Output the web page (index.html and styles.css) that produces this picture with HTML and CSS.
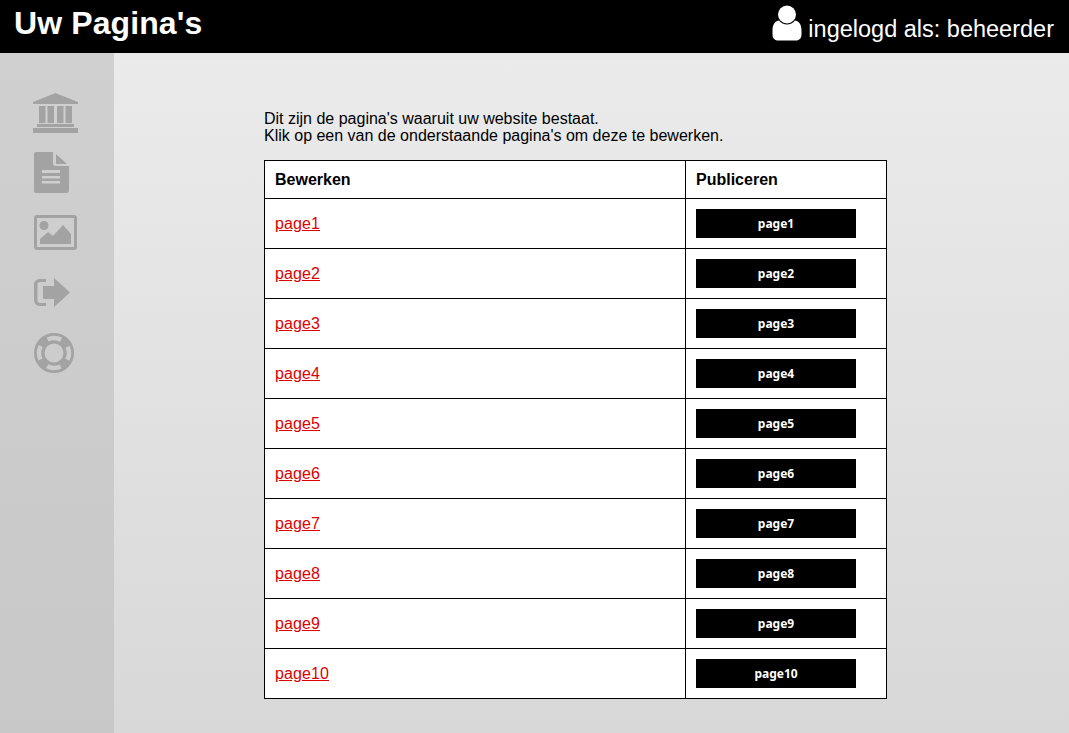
FILE: index.html
```html
<!DOCTYPE html>
<html lang="nl">
<head>
<meta charset="utf-8">
<title>Uw Pagina's</title>
<link rel="stylesheet" href="styles.css">
</head>
<body>
<header class="topbar">
  <h1 class="title">Uw Pagina's</h1>
  <div class="user">
    <svg class="user-icon" viewBox="0 0 30 36" width="30" height="36"><circle cx="15" cy="9.500" r="9" fill="#fff"/><path d="M7 15.500c2 2.500 5 4 8 4s6-1.500 8-4c4 .5 6.500 4 6.500 10v4c0 4-2.500 6-6 6H6.500c-3.500 0-6-2-6-6v-4c0-6 2.500-9.500 6.500-10z" fill="#fff"/></svg>
    <span class="user-text">ingelogd als: beheerder</span>
  </div>
</header>
<div class="layout">
  <nav class="sidebar">
    <a class="nav-item"><svg width="45" height="40" viewBox="0 0 45 40"><path d="M22.500 0 45 9v2H0V9z M6 13h6.500v17H6z M14.500 13H21v17h-6.500z M24 13h6.500v17H24z M32.500 13H39v17h-6.500z M4 31h37v3H4z M0 35h45v5H0z" fill="#a3a3a3"/></svg></a>
    <a class="nav-item"><svg width="36" height="42" viewBox="-1 0 36 42"><path d="M2 0h17v11c0 2 1 3 3 3h13v24c0 2-1 3-3 3H2c-1.500 0-2-1-2-3V2c0-1 .5-2 2-2zM8 18v3h18v-3zm0 6v2.500h18V24zm0 5v2.500h18V29zM22 2l11 10H22z" fill="#a3a3a3" fill-rule="evenodd"/></svg></a>
    <a class="nav-item"><svg width="44" height="36" viewBox="-1 0 44 36"><path d="M3 0h37c2 0 3 1 3 3v29c0 2-1 3-3 3H3c-2 0-3-1-3-3V3c0-2 1-3 3-3zm0 3v29h37V3z" fill="#a3a3a3" fill-rule="evenodd"/><circle cx="10" cy="10.500" r="4.500" fill="#a3a3a3"/><path d="M6 29v-5l8-7 5 4 10-11 8 9v10z" fill="#a3a3a3"/></svg></a>
    <a class="nav-item"><svg width="37" height="30" viewBox="-1 0 37 30"><path d="M12 1v3H6C4.500 4 3.500 5 3.500 6.500v16c0 1.500 1 2.500 2.500 2.500h6v3H6c-3.500 0-6-2.500-6-6V7c0-3.500 2.500-6 6-6z M20 0l16 14.500L20 29v-8H9V8h11z" fill="#a3a3a3"/></svg></a>
    <a class="nav-item"><svg width="41" height="40" viewBox="-1 0 41 40"><circle cx="20" cy="20" r="14.750" fill="none" stroke="#a3a3a3" stroke-width="10.500"/><circle cx="20" cy="20" r="15" fill="none" stroke="#cccccc" stroke-width="4.500" stroke-dasharray="14 9.560" stroke-dashoffset="7"/></svg></a>
  </nav>
  <main class="content">
    <p class="intro">Dit zijn de pagina's waaruit uw website bestaat.<br>Klik op een van de onderstaande pagina's om deze te bewerken.</p>
    <table class="pages">
      <thead><tr><th class="col-edit">Bewerken</th><th>Publiceren</th></tr></thead>
      <tbody>
        <tr><td><a href="#">page1</a></td><td><button class="pub">page1</button></td></tr>
        <tr><td><a href="#">page2</a></td><td><button class="pub">page2</button></td></tr>
        <tr><td><a href="#">page3</a></td><td><button class="pub">page3</button></td></tr>
        <tr><td><a href="#">page4</a></td><td><button class="pub">page4</button></td></tr>
        <tr><td><a href="#">page5</a></td><td><button class="pub">page5</button></td></tr>
        <tr><td><a href="#">page6</a></td><td><button class="pub">page6</button></td></tr>
        <tr><td><a href="#">page7</a></td><td><button class="pub">page7</button></td></tr>
        <tr><td><a href="#">page8</a></td><td><button class="pub">page8</button></td></tr>
        <tr><td><a href="#">page9</a></td><td><button class="pub">page9</button></td></tr>
        <tr><td><a href="#">page10</a></td><td><button class="pub">page10</button></td></tr>
      </tbody>
    </table>
  </main>
</div>
</body>
</html>
```
FILE: styles.css
```css
html, body {
  margin: 0;
  height: 100%;
  overflow: hidden;
}
body {
  font-family: "Liberation Sans", Arial, sans-serif;
  font-size: 16px;
  color: #000;
  display: flex;
  flex-direction: column;
}
.topbar {
  height: 53px;
  flex: none;
  background: #000;
  color: #fff;
  display: flex;
  justify-content: space-between;
  align-items: flex-start;
  padding: 0 15px 0 14px;
}
.title {
  margin: 5px 0 0;
  font-size: 32px;
  line-height: 37px;
  font-weight: bold;
  letter-spacing: 0.1px;
}
.user {
  display: flex;
  align-items: flex-start;
  gap: 6px;
  padding-top: 5px;
}
.user-icon {
  display: block;
}
.user-text {
  font-size: 23.500px;
  line-height: 28px;
  margin-top: 10px;
}
.layout {
  flex: 1;
  display: flex;
  min-height: 0;
}
.sidebar {
  width: 114px;
  flex: none;
  box-sizing: border-box;
  padding: 30px 0 0 33px;
  background: linear-gradient(#d0d0d0, #c8c8c8);
  display: flex;
  flex-direction: column;
}
.nav-item {
  height: 60px;
  display: flex;
  align-items: center;
}
.content {
  flex: 1;
  padding: 57px 0 0 150px;
  background: linear-gradient(#ebebeb, #d8d8d8);
}
.intro {
  margin: 0 0 16px;
  line-height: 17px;
}
.pages {
  width: 623px;
  border-collapse: collapse;
  background: #fff;
  table-layout: fixed;
}
.pages th, .pages td {
  border: 1px solid #000;
  padding: 0 10px;
  text-align: left;
}
.pages th {
  height: 37px;
}
.pages td {
  height: 49px;
}
.col-edit {
  width: 400px;
}
.pages a {
  color: #dd0000;
  letter-spacing: 0.1px;
}
.pub {
  display: block;
  width: 160px;
  height: 29px;
  border: 0;
  padding: 0;
  background: #000;
  color: #fff;
  font-family: "Noto Sans", sans-serif;
  font-size: 12px;
  font-weight: bold;
}
```
